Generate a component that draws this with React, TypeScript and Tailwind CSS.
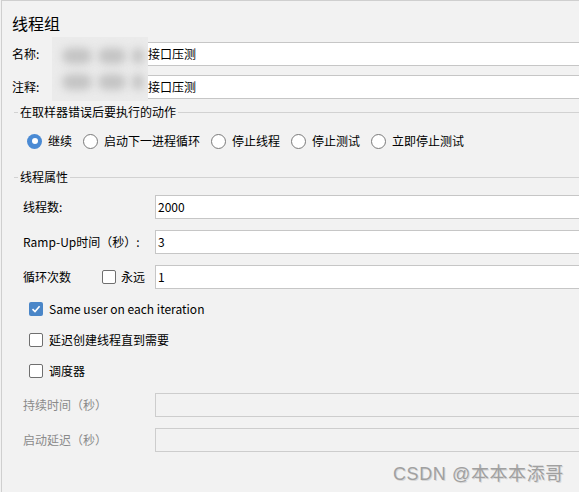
import React from "react";

const font = "font-['Noto_Sans_CJK_SC','Noto_Sans',sans-serif]";

const Radio = ({ checked, label }: { checked?: boolean; label: string }) => (
  <div className="flex items-center gap-[6px]">
    {checked ? (
      <span className="w-[15px] h-[15px] rounded-full bg-[#4a8ad4] flex items-center justify-center">
        <span className="w-[6px] h-[6px] rounded-full bg-white" />
      </span>
    ) : (
      <span className="w-[15px] h-[15px] rounded-full bg-white border border-[#7a7a7a]" />
    )}
    <span>{label}</span>
  </div>
);

const Check = ({ checked }: { checked?: boolean }) =>
  checked ? (
    <span className="w-[14px] h-[14px] rounded-[2px] bg-[#4a86c8] flex items-center justify-center">
      <svg width="10" height="10" viewBox="0 0 10 10">
        <path d="M1.5 5.2 L4 7.6 L8.6 2.2" stroke="white" strokeWidth="1.6" fill="none" />
      </svg>
    </span>
  ) : (
    <span className="w-[14px] h-[14px] rounded-[2px] bg-white border border-[#6f6f6f]" />
  );

const GroupTitle = ({ text }: { text: string }) => (
  <div className="flex items-center h-[16px] pl-[12px]">
    <span className="w-[4px] h-px bg-[#d2d2d2]" />
    <span className="mx-[2px]">{text}</span>
    <span className="flex-1 h-px bg-[#d2d2d2]" />
  </div>
);

const Blob = ({ w }: { w: number }) => (
  <span className="h-[16px] rounded-full bg-[#c4c4c4] blur-[4px]" style={{ width: w }} />
);

export default function App() {
  return (
    <div className={`w-[579px] h-[492px] bg-[#f2f2f2] overflow-hidden text-[12px] text-black ${font}`}>
      <div className="ml-px h-full border-l border-t border-[#cfcfcf] relative flex flex-col">
        <div className="h-[41px] pt-[3px] pl-[10px] flex items-center text-[16px]">线程组</div>

        <div className="flex items-center pl-[10px]">
          <span className="w-[40px]">名称:</span>
          <div className="flex-1 h-[24px] border border-r-0 border-[#c6c6c6] bg-white flex items-center">
            <span className="w-[95px]" />
            <span>接口压测</span>
          </div>
        </div>
        <div className="flex items-center pl-[10px] mt-[9px]">
          <span className="w-[40px]">注释:</span>
          <div className="flex-1 h-[24px] border border-r-0 border-[#c6c6c6] bg-white flex items-center">
            <span className="w-[95px]" />
            <span>接口压测</span>
          </div>
        </div>

        <div className="mt-[5px]">
          <GroupTitle text="在取样器错误后要执行的动作" />
        </div>
        <div className="mt-[13px] h-[16px] pl-[25px] flex items-center gap-[11px]">
          <Radio checked label="继续" />
          <Radio label="启动下一进程循环" />
          <Radio label="停止线程" />
          <Radio label="停止测试" />
          <Radio label="立即停止测试" />
        </div>

        <div className="mt-[20px]">
          <GroupTitle text="线程属性" />
        </div>

        <div className="mt-[10px] flex flex-col gap-[11px] pl-[21px]">
          <div className="flex items-center">
            <span className="w-[132px]">线程数:</span>
            <div className="flex-1 h-[24px] border border-r-0 border-[#c6c6c6] bg-white flex items-center pl-[2px]">2000</div>
          </div>
          <div className="flex items-center">
            <span className="w-[132px]">Ramp-Up时间（秒）:</span>
            <div className="flex-1 h-[24px] border border-r-0 border-[#c6c6c6] bg-white flex items-center pl-[2px]">3</div>
          </div>
          <div className="flex items-center">
            <span className="w-[79px]">循环次数</span>
            <div className="flex items-center gap-[5px] w-[53px]">
              <Check />
              <span>永远</span>
            </div>
            <div className="flex-1 h-[24px] border border-r-0 border-[#c6c6c6] bg-white flex items-center pl-[2px]">1</div>
          </div>
        </div>

        <div className="mt-[12px] flex flex-col gap-[15px] pl-[27px]">
          <div className="h-[16px] flex items-center gap-[6px]">
            <Check checked />
            <span>Same user on each iteration</span>
          </div>
          <div className="h-[16px] flex items-center gap-[6px]">
            <Check />
            <span>延迟创建线程直到需要</span>
          </div>
          <div className="h-[16px] flex items-center gap-[6px]">
            <Check />
            <span>调度器</span>
          </div>
        </div>

        <div className="mt-[14px] flex flex-col gap-[11px] pl-[21px] text-[#8a8a8a]">
          <div className="flex items-center">
            <span className="w-[132px]">持续时间（秒）</span>
            <div className="flex-1 h-[24px] border border-r-0 border-[#cdcdcd] bg-[#f2f2f2]" />
          </div>
          <div className="flex items-center">
            <span className="w-[132px]">启动延迟（秒）</span>
            <div className="flex-1 h-[24px] border border-r-0 border-[#cdcdcd] bg-[#f2f2f2]" />
          </div>
        </div>

        {/* redacted prefix */}
        <div className="absolute left-[50px] top-[36px] w-[96px] h-[64px] bg-[#ebebeb] flex flex-col justify-around py-[6px] overflow-hidden">
          <div className="flex items-center gap-[6px] pl-[10px]">
            <Blob w={30} />
            <Blob w={28} />
            <Blob w={12} />
          </div>
          <div className="flex items-center gap-[6px] pl-[10px]">
            <Blob w={30} />
            <Blob w={28} />
            <Blob w={12} />
          </div>
        </div>

        <div className="absolute left-[391px] top-[460px] text-[18px] tracking-[0.6px] text-[#a0a0a0] [text-shadow:1px_1px_0_#d8d8d8] font-['Liberation_Sans','Noto_Sans_CJK_SC',sans-serif]">
          CSDN @本本本添哥
        </div>
      </div>
    </div>
  );
}
